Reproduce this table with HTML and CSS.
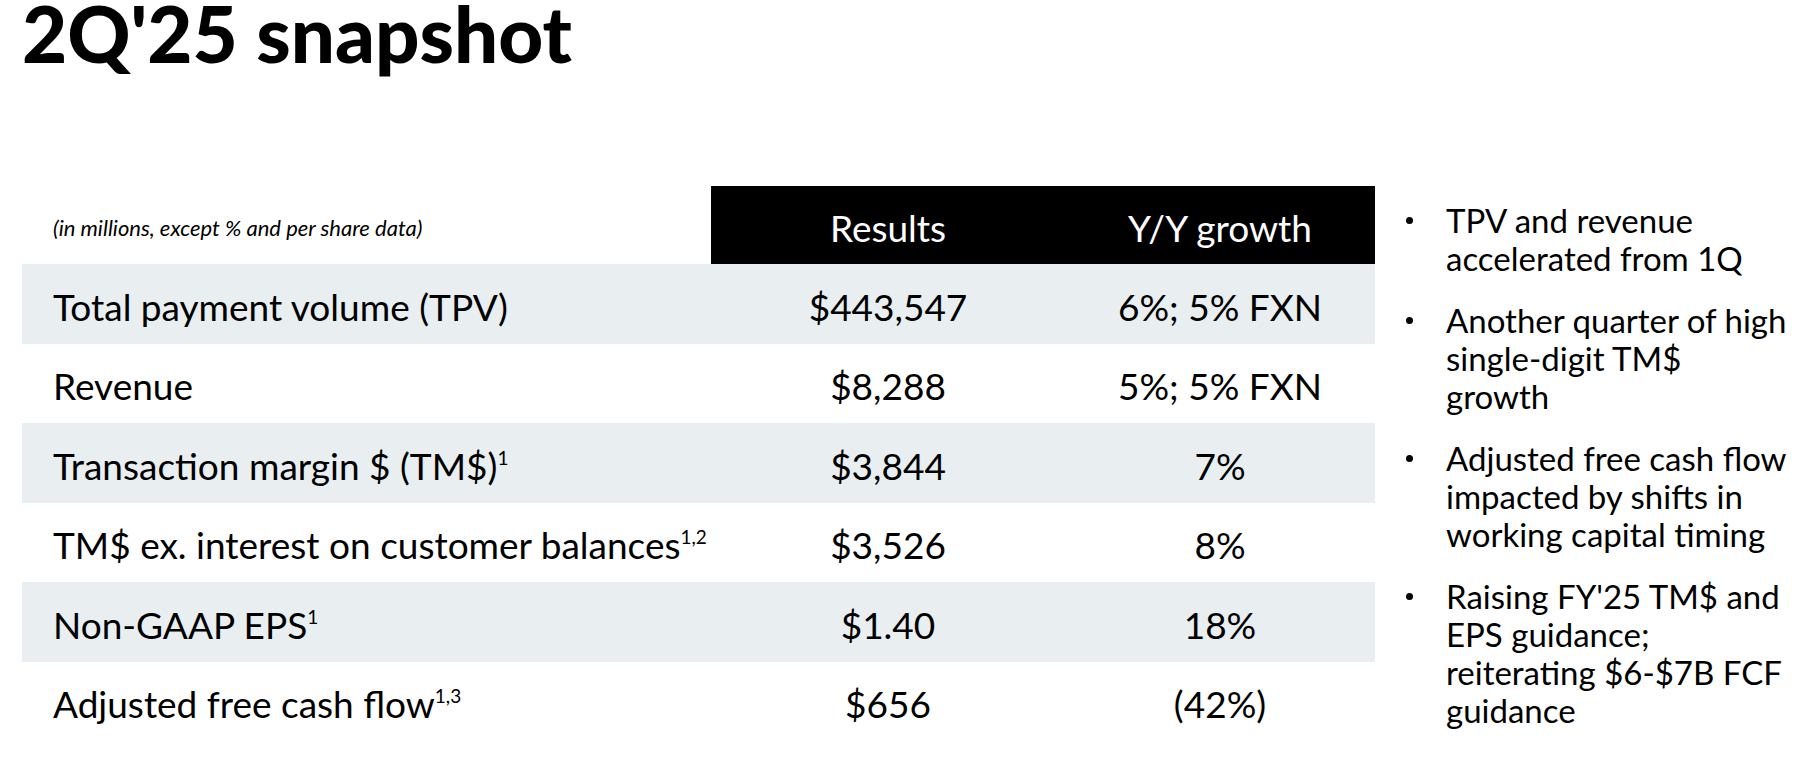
FILE: index.html
```html
<!DOCTYPE html>
<html lang="en">
<head>
<meta charset="utf-8">
<title>2Q'25 snapshot</title>
<link rel="stylesheet" href="styles.css">
</head>
<body>
<div class="page">
  <h1 class="title">2Q'25 snapshot</h1>
  <div class="main">
    <div class="table">
      <div class="row head-row">
        <div class="note">(in millions, except % and per share data)</div>
        <div class="head">Results</div>
        <div class="head">Y/Y growth</div>
      </div>
      <div class="row shade">
        <div class="label">Total payment volume (TPV)</div>
        <div class="val">$443,547</div>
        <div class="val">6%; 5% FXN</div>
      </div>
      <div class="row">
        <div class="label">Revenue</div>
        <div class="val">$8,288</div>
        <div class="val">5%; 5% FXN</div>
      </div>
      <div class="row shade">
        <div class="label">Transaction margin $ (TM$)<sup>1</sup></div>
        <div class="val">$3,844</div>
        <div class="val">7%</div>
      </div>
      <div class="row">
        <div class="label">TM$ ex. interest on customer balances<sup>1,2</sup></div>
        <div class="val">$3,526</div>
        <div class="val">8%</div>
      </div>
      <div class="row shade">
        <div class="label">Non-GAAP EPS<sup>1</sup></div>
        <div class="val">$1.40</div>
        <div class="val">18%</div>
      </div>
      <div class="row">
        <div class="label">Adjusted free cash flow<sup>1,3</sup></div>
        <div class="val">$656</div>
        <div class="val">(42%)</div>
      </div>
    </div>
    <ul class="points">
      <li><span class="dot"></span><span class="txt">TPV and revenue<br>accelerated from 1Q</span></li>
      <li><span class="dot"></span><span class="txt">Another quarter of high<br>single-digit TM$<br>growth</span></li>
      <li><span class="dot"></span><span class="txt">Adjusted free cash flow<br>impacted by shifts in<br>working capital timing</span></li>
      <li><span class="dot"></span><span class="txt">Raising FY'25 TM$ and<br>EPS guidance;<br>reiterating $6-$7B FCF<br>guidance</span></li>
    </ul>
  </div>
</div>
</body>
</html>
```
FILE: styles.css
```css
html, body {
  margin: 0;
  padding: 0;
  background: #ffffff;
}
body {
  font-family: Lato, "Liberation Sans", sans-serif;
  color: #000000;
  width: 1809px;
  height: 780px;
  overflow: hidden;
}
.page {
  padding-top: 0;
}
.title {
  margin: 0;
  padding: 0 0 0 22px;
  font-family: Lato, sans-serif;
  font-weight: 900;
  font-size: 78px;
  line-height: 66px;
  height: 66px;
}
.main {
  display: flex;
  align-items: flex-start;
  margin-top: 120px;
}
.table {
  margin-left: 22px;
  width: 1353px;
  display: flex;
  flex-direction: column;
}
.row {
  display: grid;
  grid-template-columns: 689px 354px 310px;
  height: 79.5px;
  align-items: center;
}
.row.head-row {
  height: 78px;
  align-items: stretch;
}
.shade {
  background: #e9eef1;
}
.note {
  font-style: italic;
  font-size: 22px;
  padding-left: 31px;
  display: flex;
  align-items: center;
  padding-top: 4px;
}
.head {
  background: #000000;
  color: #ffffff;
  font-size: 37px;
  display: flex;
  align-items: center;
  justify-content: center;
  padding-top: 4px;
}
.label {
  font-size: 37px;
  padding-left: 31px;
  padding-top: 5px;
  white-space: nowrap;
}
.val {
  font-size: 37px;
  text-align: center;
  padding-top: 5px;
  white-space: nowrap;
}
.label sup {
  font-size: 19px;
  vertical-align: 0;
  position: relative;
  top: -15px;
}
.points {
  list-style: none;
  margin: 0 0 0 31px;
  padding: 15px 0 0 0;
  display: flex;
  flex-direction: column;
  gap: 24px;
}
.points li {
  display: flex;
  align-items: flex-start;
  font-size: 33px;
  line-height: 38px;
}
.dot {
  flex: none;
  width: 7px;
  height: 7px;
  border-radius: 50%;
  background: #000000;
  margin-top: 16px;
  margin-right: 33px;
}
.txt {
  white-space: nowrap;
}
```
